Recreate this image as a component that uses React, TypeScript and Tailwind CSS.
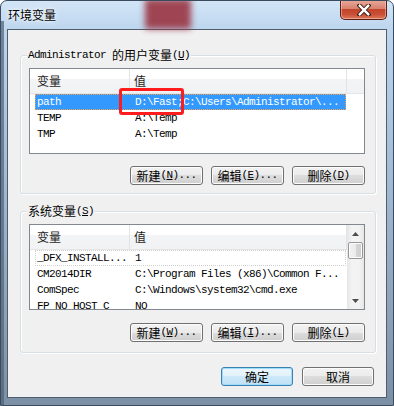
import React from "react";

function Cjk({ children }: { children: React.ReactNode }) {
  return (
    <span className="font-['Noto_Sans_CJK_SC',sans-serif] text-[12px] tracking-normal">
      {children}
    </span>
  );
}

function Acc({ k }: { k: string }) {
  return (
    <span className="font-['Liberation_Mono',monospace] text-[11px] tracking-[-0.6px]">
      (<span className="underline underline-offset-[1px]">{k}</span>)
    </span>
  );
}

function Btn({
  children,
  primary,
  w,
}: {
  children: React.ReactNode;
  primary?: boolean;
  w: string;
}) {
  return (
    <div
      className={
        primary
          ? `${w} h-[19px] flex items-center justify-center rounded-[3px] border border-[#3c7fb1] bg-[linear-gradient(#eaf6fd,#e2f1fa_50%,#cde9f9_50%,#bfe1f5)] shadow-[inset_0_0_0_1px_#9fdcf9] text-black leading-none`
          : `${w} h-[19px] flex items-center justify-center rounded-[3px] border border-[#707070] bg-[linear-gradient(#f2f2f2,#ebebeb_50%,#dddddd_50%,#cfcfcf)] shadow-[inset_0_0_0_1px_#fcfcfc] text-black leading-none`
      }
    >
      {children}
    </div>
  );
}

type Row = { name: string; value: string };

function ListView({
  rows,
  selected,
  focus,
  scroll,
}: {
  rows: Row[];
  selected?: number;
  focus?: number;
  scroll?: boolean;
}) {
  return (
    <div className="w-[336px] h-[86px] border border-[#828790] bg-white flex overflow-hidden">
      <div className="flex-1 flex flex-col overflow-hidden">
        <div className="h-[25px] shrink-0 flex border-b border-[#e5e5e5] bg-[linear-gradient(#ffffff,#ffffff_42%,#f3f4f6_42%,#f1f2f4)] text-[#1e1e1e]">
          <div className="w-[100px] border-r border-[#e2e3e5] pl-[7px] flex items-center">
            <Cjk>变量</Cjk>
          </div>
          <div className="w-[217px] border-r border-[#e2e3e5] pl-[4px] flex items-center">
            <Cjk>值</Cjk>
          </div>
          <div className="flex-1" />
        </div>
        <div className="flex flex-col">
          {rows.map((r, i) => {
            const sel = i === selected;
            const foc = i === focus;
            return (
              <div
                key={i}
                className={
                  sel
                    ? "ml-[5px] w-[311px] h-[16px] shrink-0 flex items-center bg-[#3399ff] text-white outline outline-1 outline-dotted outline-[#f5a04a] -outline-offset-1"
                    : foc
                    ? "ml-[5px] w-[311px] h-[16px] shrink-0 flex items-center text-black outline outline-1 outline-dotted outline-[#cfcfcf] -outline-offset-1"
                    : "ml-[5px] w-[311px] h-[16px] shrink-0 flex items-center text-black"
                }
              >
                <div className="w-[100px] pl-[2px] whitespace-nowrap overflow-hidden font-['Liberation_Mono',monospace] text-[11px] tracking-[-0.6px]">
                  {r.name}
                </div>
                <div className="flex-1 whitespace-nowrap overflow-hidden font-['Liberation_Mono',monospace] text-[11px] tracking-[-0.6px]">
                  {r.value}
                </div>
              </div>
            );
          })}
        </div>
      </div>
      {scroll && (
        <div className="w-[17px] shrink-0 flex flex-col bg-[linear-gradient(90deg,#e6e6e6,#f3f3f3_30%,#f3f3f3_70%,#e6e6e6)]">
          <div className="h-[17px] flex items-center justify-center">
            <svg width="7" height="4" viewBox="0 0 7 4">
              <path d="M3.5 0 L7 4 L0 4 Z" fill="#4d4d4d" />
            </svg>
          </div>
          <div className="mx-[1px] h-[17px] rounded-[2px] border border-[#979797] bg-[linear-gradient(90deg,#f2f2f2,#ebebeb_50%,#d6d6d6_50%,#cfcfcf)] shadow-[inset_0_0_0_1px_#fbfbfb]" />
          <div className="flex-1" />
          <div className="h-[17px] flex items-center justify-center">
            <svg width="7" height="4" viewBox="0 0 7 4">
              <path d="M0 0 L7 0 L3.5 4 Z" fill="#4d4d4d" />
            </svg>
          </div>
        </div>
      )}
    </div>
  );
}

export default function App() {
  const userRows: Row[] = [
    { name: "path", value: "D:\\Fast;C:\\Users\\Administrator\\..." },
    { name: "TEMP", value: "A:\\Temp" },
    { name: "TMP", value: "A:\\Temp" },
  ];
  const sysRows: Row[] = [
    { name: "_DFX_INSTALL...", value: "1" },
    { name: "CM2014DIR", value: "C:\\Program Files (x86)\\Common F..." },
    { name: "ComSpec", value: "C:\\Windows\\system32\\cmd.exe" },
    { name: "FP_NO_HOST_C", value: "NO" },
  ];

  return (
    <div className="relative w-[394px] h-[406px] overflow-hidden rounded-t-[7px] border border-[#3a4b5e] bg-[linear-gradient(180deg,#d3e5f7_0%,#bdd6ee_7%,#a8c1db_35%,#8ea3ba_75%,#7b8fa5_100%)] flex flex-col">
      {/* blurred background showing through glass */}
      <div className="absolute left-[144px] top-[-2px] w-[46px] h-[30px] bg-[#9a3441] blur-[3px] opacity-90" />
      <div className="absolute left-0 top-[20px] w-[3px] h-[386px] bg-[#4e6075] opacity-70" />

      {/* Title bar */}
      <div className="relative h-[28px] shrink-0 flex items-center pl-[7px]">
        <span className="font-['Noto_Sans_CJK_SC',sans-serif] text-[12px] text-black [text-shadow:0_0_6px_#fff,0_0_3px_#fff]">
          环境变量
        </span>
      </div>

      {/* Close button */}
      <div className="absolute top-[-1px] right-[6px] w-[47px] h-[20px] rounded-b-[5px] border border-t-0 border-[#5e1e16] bg-[linear-gradient(#e8aa9b,#d9826f_45%,#c3452c_50%,#c84e34_75%,#dd7a5c)] shadow-[inset_0_0_0_1px_rgba(255,220,210,0.45)] flex items-center justify-center">
        <svg width="14" height="12" viewBox="0 0 14 12">
          <path d="M2.5 1.5 L11.5 10.5 M11.5 1.5 L2.5 10.5" stroke="#3b1a14" strokeWidth="4.2" strokeLinecap="square" />
          <path d="M2.8 1.8 L11.2 10.2 M11.2 1.8 L2.8 10.2" stroke="#ffffff" strokeWidth="2.4" strokeLinecap="square" />
        </svg>
      </div>

      {/* Client area */}
      <div className="ml-[6px] w-[380px] h-[369px] shrink-0 border border-[#4f5e6f] bg-[#f0f0f0] flex flex-col">
        {/* User variables group */}
        <div className="relative ml-[12px] mt-[25px] w-[356px] h-[139px] shrink-0 rounded-[3px] border border-[#d5dfe5] shadow-[inset_1px_1px_0_#fff,1px_1px_0_#fff] pt-[12px] pl-[8px] flex flex-col">
          <div className="absolute top-[-8px] left-[6px] h-[14px] px-[1px] bg-[#f0f0f0] flex items-center text-black font-['Liberation_Mono',monospace] text-[11px] tracking-[-0.6px] whitespace-nowrap">
            Administrator&nbsp;<Cjk>的用户变量</Cjk>
            <Acc k="U" />
          </div>
          <ListView rows={userRows} selected={0} />
          <div className="mt-[12px] w-[336px] flex justify-end gap-[8px]">
            <Btn w="w-[73px]">
              <Cjk>新建</Cjk>
              <Acc k="N" />
              <span className="font-['Liberation_Mono',monospace] text-[11px] tracking-[-0.6px]">...</span>
            </Btn>
            <Btn w="w-[73px]">
              <Cjk>编辑</Cjk>
              <Acc k="E" />
              <span className="font-['Liberation_Mono',monospace] text-[11px] tracking-[-0.6px]">...</span>
            </Btn>
            <Btn w="w-[73px]">
              <Cjk>删除</Cjk>
              <Acc k="D" />
            </Btn>
          </div>
        </div>

        {/* System variables group */}
        <div className="relative ml-[12px] mt-[17px] w-[356px] h-[142px] shrink-0 rounded-[3px] border border-[#d5dfe5] shadow-[inset_1px_1px_0_#fff,1px_1px_0_#fff] pt-[12px] pl-[8px] flex flex-col">
          <div className="absolute top-[-8px] left-[6px] h-[14px] px-[1px] bg-[#f0f0f0] flex items-center text-black whitespace-nowrap">
            <Cjk>系统变量</Cjk>
            <Acc k="S" />
          </div>
          <ListView rows={sysRows} focus={0} scroll />
          <div className="mt-[13px] w-[336px] flex justify-end gap-[8px]">
            <Btn w="w-[73px]">
              <Cjk>新建</Cjk>
              <Acc k="W" />
              <span className="font-['Liberation_Mono',monospace] text-[11px] tracking-[-0.6px]">...</span>
            </Btn>
            <Btn w="w-[73px]">
              <Cjk>编辑</Cjk>
              <Acc k="I" />
              <span className="font-['Liberation_Mono',monospace] text-[11px] tracking-[-0.6px]">...</span>
            </Btn>
            <Btn w="w-[73px]">
              <Cjk>删除</Cjk>
              <Acc k="L" />
            </Btn>
          </div>
        </div>

        {/* OK / Cancel */}
        <div className="mt-[14px] pr-[12px] flex justify-end gap-[9px]">
          <Btn w="w-[72px]" primary>
            <Cjk>确定</Cjk>
          </Btn>
          <Btn w="w-[72px]">
            <Cjk>取消</Cjk>
          </Btn>
        </div>
      </div>

      {/* Red annotation rectangle */}
      <div className="absolute left-[118px] top-[87px] w-[65px] h-[27px] rounded-[3px] border-[3px] border-[#ff1c1c]" />
    </div>
  );
}
